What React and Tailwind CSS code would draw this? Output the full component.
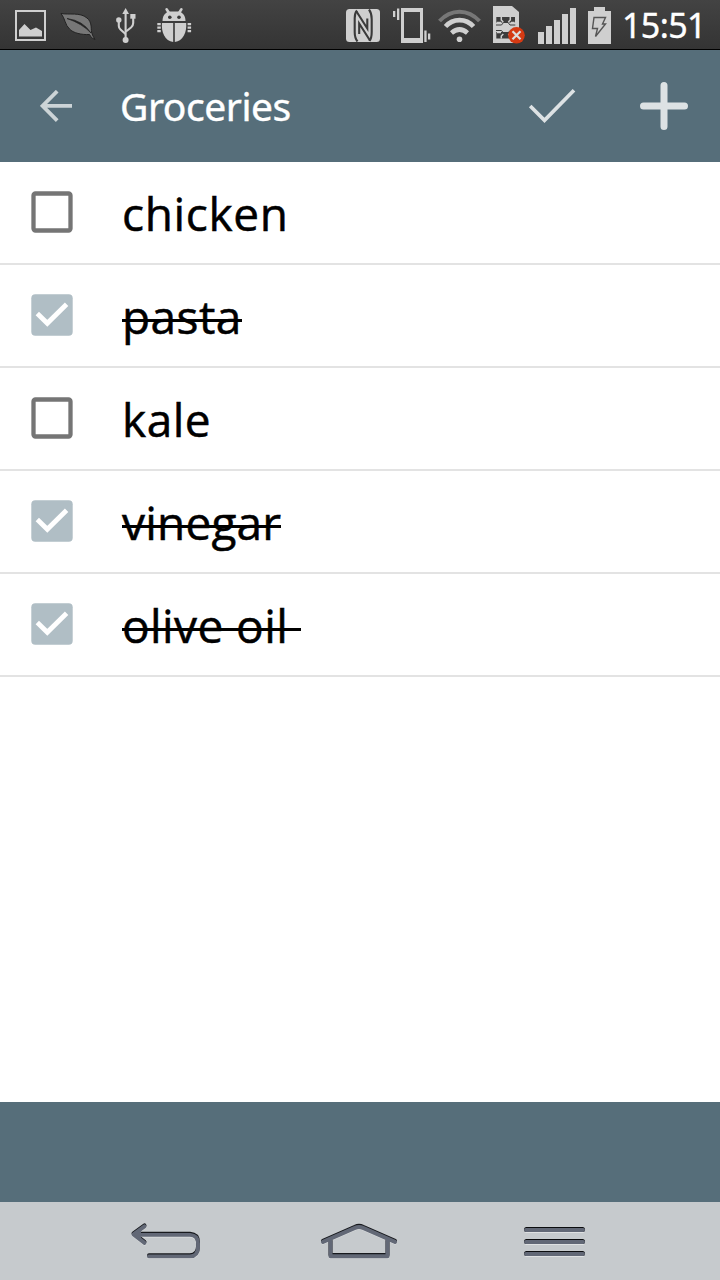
import React from "react";

const items = [
  { name: "chicken", done: false, tracking: "tracking-[0.65px]" },
  { name: "pasta", done: true, tracking: "tracking-[0.45px]" },
  { name: "kale", done: false, tracking: "tracking-[0.5px]" },
  { name: "vinegar", done: true, tracking: "tracking-[0.2px]" },
  { name: "olive oil ", done: true, tracking: "tracking-[0.4px]" },
];

function StatusBar() {
  return (
    <div className="flex h-[50px] shrink-0 items-start border-b border-black bg-gradient-to-b from-[#434343] to-[#343434] text-[#cfcfcf]">
      <svg className="ml-[15px] mt-[10px] h-[31px] w-[31px] shrink-0" viewBox="15 10 31 31">
        <path d="M16 11H45V40H16Z" fill="none" stroke="currentColor" strokeWidth="2" />
        <path d="M19 36.5V30L24.5 24L30.5 30L36 27.5L42 31V36.5Z" fill="currentColor" />
      </svg>
      <svg className="ml-[14px] mt-[11px] h-[30px] w-[36px] shrink-0" viewBox="60 11 36 30">
        <path d="M61 13.5C69 15 80 12 87 18C92 22 91 28 91.5 32Q92.5 36 95 39.5Q91 38.5 89.5 34.5C82 35 73 33 69.5 29C65 25 65 18 61 13.5Z" fill="#777" stroke="#222" strokeWidth="1" />
        <path d="M67 18.5Q83 20.5 91 33Q82 23.5 67 18.5Z" fill="#222" stroke="#222" strokeWidth=".7" />
      </svg>
      <svg className="ml-[19px] mt-[8px] h-[36px] w-[22px] shrink-0" viewBox="115 8 22 36">
        <g fill="none" stroke="currentColor" strokeWidth="2.1">
          <path d="M125.6 12V40" />
          <path d="M118.8 21V26Q118.8 28 120.5 29.5L125.5 34" />
          <path d="M133.2 17V23Q133.2 25.5 131 27.5L126 31.5" />
        </g>
        <g fill="currentColor">
          <path d="M122.3 14L125.6 8L129 14Z" />
          <circle cx="118.8" cy="20" r="2.7" />
          <path d="M130.3 14H135.5V18.7H130.3Z" />
          <circle cx="125.6" cy="40" r="3" />
        </g>
      </svg>
      <svg className="ml-[19px] mt-[7px] h-[36px] w-[36px] shrink-0" viewBox="156 7 36 36">
        <g fill="currentColor">
          <path d="M162.5 21C162.5 15 166 12 169.5 11.5H178.500C182 12 185.500 15 185.500 21Z" />
          <path d="M162 23H173.2V42C165 41 161 32 162 23Z" />
          <path d="M174.8 23H186.2C187 32 183 41 174.8 42Z" />
          <path d="M157.3 23h3.500v2.300h-3.500zM157.3 26.500h3.500v2.300h-3.500zM157.3 30h3.500v2.200h-3.500zM187.6 23h3.500v2.300h-3.500zM187.6 26.500h3.500v2.300h-3.500zM187.6 30h3.500v2.200h-3.500z" />
        </g>
        <path d="M166.600 9.300L169 13M181.400 9.300L179 13" stroke="currentColor" strokeWidth="2.600" strokeLinecap="round" />
        <circle cx="169.8" cy="17.300" r="1.800" fill="#383838" />
        <circle cx="179" cy="17.300" r="1.800" fill="#383838" />
      </svg>
      <svg className="ml-[154px] mt-[9px] h-[33px] w-[34px] shrink-0" viewBox="346 9 34 33">
        <rect x="346" y="9" width="34" height="33" rx="3.5" fill="currentColor" />
        <g fill="none" stroke="#3a3a3a" strokeWidth="2.100">
          <path d="M357 10.500Q354.700 13 354.700 18V32Q354.700 38 357.500 41.500" />
          <path d="M356.500 11.500L367.300 28.500V18.500" />
          <path d="M359.200 34V23.500L370 40.500" />
          <path d="M369.500 41Q371.700 38 371.700 32V19Q371.700 13 369 9.500" />
        </g>
      </svg>
      <svg className="ml-[13px] mt-[8px] h-[36px] w-[38px] shrink-0" viewBox="393 8 38 36">
        <path fill="currentColor" fillRule="evenodd" d="M401 8H423V43H401ZM404 12H420V38H404Z" />
        <path fill="currentColor" d="M393 11h2.300v6H393zM397 8.500h2.300V20H397zM424.300 30.500h2.300V42h-2.300zM428 33.500h2.300v6H428z" />
      </svg>
      <svg className="ml-[7px] mt-[9px] h-[34px] w-[44px] shrink-0" viewBox="438 9 44 34">
        <path d="M439.500 21C451 8.500 468 8.500 479.500 21" fill="none" stroke="#777" strokeWidth="4" />
        <path d="M445.500 26.500C453 18 466 18 473.500 26.500M451.500 33Q459.500 26 467.500 33" fill="none" stroke="currentColor" strokeWidth="4.600" />
        <circle cx="459.500" cy="39.300" r="2.800" fill="currentColor" />
      </svg>
      <svg className="ml-[11px] mt-[6px] h-[38px] w-[32px] shrink-0" viewBox="493 6 32 38">
        <path d="M493 6H512L519 12V43H493Z" fill="currentColor" />
        <path d="M496.300 17H515V22.500H496.300ZM496.300 32H515V38.500H496.300Z" fill="#3c3c3c" />
        <path d="M496 25H501.500L503.500 22.500H508L510 25H515.300M496 30.500H501.500L503.500 33H508L510 30.500H515.300" fill="none" stroke="#3c3c3c" strokeWidth="1" />
        <path d="M501.300 17V20L503.300 22M510.300 17V20L508.300 22M497 22.500H501M511 22.500H514.500M501.300 38.500V36L503.300 34M510.300 38.500V36L508.300 34M497 32.500H501" fill="none" stroke="currentColor" strokeWidth="1.500" />
        <circle cx="516.500" cy="35.300" r="8.300" fill="#d53a13" />
        <path d="M512.500 31.300L520.500 39.300M520.500 31.300L512.500 39.300" stroke="#ddd" strokeWidth="2.200" />
      </svg>
      <svg className="ml-[13px] mt-[8px] h-[36px] w-[38px] shrink-0" viewBox="538 8 38 36">
        <path fill="currentColor" d="M538 32h6v12h-6zM546 26h6v18h-6zM554 20h6v24h-6zM562 14h6v30h-6zM570 8h6v36h-6z" />
      </svg>
      <svg className="ml-[12px] mt-[7px] h-[37px] w-[23px] shrink-0" viewBox="588 7 23 37">
        <path fill="currentColor" d="M588 11H594V7H605V11H611V44H588Z" />
        <path d="M594 17.5H605.5L602.5 24H605.5L595.5 36.5L597.5 28.5H592.5Z" fill="none" stroke="#555" strokeWidth="1.400" />
      </svg>
      <span className="ml-[11px] mt-px whitespace-nowrap font-['Noto_Sans',sans-serif] text-[34px] leading-[48px] tracking-[-0.6px] text-white [-webkit-text-stroke:0.4px_white]">15:51</span>
    </div>
  );
}

function Header() {
  return (
    <header className="flex h-[112px] shrink-0 items-center bg-[#566e7a]">
      <svg className="ml-[40px] h-[32px] w-[32px] shrink-0" viewBox="40 90 32 32">
        <path d="M72 105.9H42M57.2 91.2L42.5 105.9L57.2 120.6" fill="none" stroke="#ccd4d7" strokeWidth="3.8" />
      </svg>
      <h1 className="ml-[48px] w-[180px] whitespace-nowrap font-['Noto_Sans',sans-serif] text-[39px] leading-[56px] font-normal tracking-[-0.45px] text-white [-webkit-text-stroke:0.4px_white]">Groceries</h1>
      <svg className="ml-[228px] h-[36px] w-[48px] shrink-0" viewBox="528 88 48 36">
        <path d="M530.2 106L544.5 120.3L574 90.3" fill="none" stroke="#dde2e4" strokeWidth="3.7" />
      </svg>
      <svg className="ml-[64px] h-[50px] w-[48px] shrink-0" viewBox="640 81 48 50">
        <path d="M643.5 105.9H684.5M664 85.4V126.4" stroke="#dde2e4" strokeWidth="7" strokeLinecap="round" />
      </svg>
    </header>
  );
}

function Checkbox({ checked }) {
  return (
    <svg className="mt-[29px] ml-[31px] h-[42px] w-[42px] shrink-0" viewBox="0 0 42 42">
      {checked ? (
        <>
          <rect x=".3" y=".3" width="41.4" height="41.4" rx="4" fill="#b0bec5" />
          <path d="M6.3 19.5L16.3 29.3L35.6 10.2" fill="none" stroke="white" strokeWidth="4.800" />
        </>
      ) : (
        <rect x="2.5" y="2.5" width="37" height="37" rx="2" fill="none" stroke="#757575" strokeWidth="4.3" />
      )}
    </svg>
  );
}

function Item({ item }) {
  return (
    <li className="flex h-[103px] items-start border-b-2 border-[#e3e3e3]">
      <Checkbox checked={item.done} />
      <span className={`relative mt-px ml-[49px] whitespace-pre font-['Open_Sans',sans-serif] text-[46px] leading-[101px] text-black [-webkit-text-stroke:0.5px_black] ${item.tracking}`}>
        {item.name}
        {item.done && <span className="absolute top-[53px] left-0 h-[3px] w-full bg-black" />}
      </span>
    </li>
  );
}

function NavBar() {
  return (
    <nav className="flex h-[78px] shrink-0 items-start bg-[#c6cacd]">
      <svg className="ml-[130px] mt-[20px] h-[42px] w-[72px] shrink-0" viewBox="130 1221 72 42" fill="none" strokeLinecap="round" strokeLinejoin="round">
        {[["#dfe1e2", 1], ["#17191d", -0.7], ["#626876", 0.4]].map(([color, dy]) => (
          <path key={color} transform={`translate(0 ${dy})`} d="M144.5 1225L133.5 1233L144.5 1241.5M135 1233.5H190Q198 1234 198 1242V1246Q198 1254.5 190 1255H149" stroke={color} strokeWidth="3.9" />
        ))}
        <path d="M133 1233L141 1227.500V1239Z" fill="#626876" />
      </svg>
      <svg className="ml-[118px] mt-[20px] h-[42px] w-[78px] shrink-0" viewBox="320 1221 78 42" fill="none" strokeLinecap="round" strokeLinejoin="round">
        {[["#dfe1e2", 1], ["#17191d", -0.7], ["#626876", 0.4]].map(([color, dy]) => (
          <path key={color} transform={`translate(0 ${dy})`} d="M323 1240.500L355 1226.500Q359 1224.500 363 1226.500L395 1240.500M330.500 1240V1254.800H387.500V1240" stroke={color} strokeWidth="4" />
        ))}
      </svg>
      <svg className="ml-[125px] mt-[22px] h-[36px] w-[64px] shrink-0" viewBox="523 1224 64 36">
        {[1227, 1239, 1251].map((y) => (
          <g key={y}>
            <rect x="524" y={y + 1} width="61" height="5" rx="2.5" fill="#dfe1e2" />
            <rect x="524" y={y} width="61" height="5" rx="2.5" fill="#0b0c0e" />
            <rect x="524" y={y + 1} width="61" height="4" rx="2" fill="#626876" />
          </g>
        ))}
      </svg>
    </nav>
  );
}

export default function App() {
  return (
    <div className="flex h-[1280px] w-[720px] flex-col overflow-hidden bg-white">
      <StatusBar />
      <Header />
      <main className="flex-1">
        <ul>
          {items.map((item) => (
            <Item key={item.name} item={item} />
          ))}
        </ul>
      </main>
      <footer className="h-[100px] shrink-0 bg-[#566e7a]" />
      <NavBar />
    </div>
  );
}
